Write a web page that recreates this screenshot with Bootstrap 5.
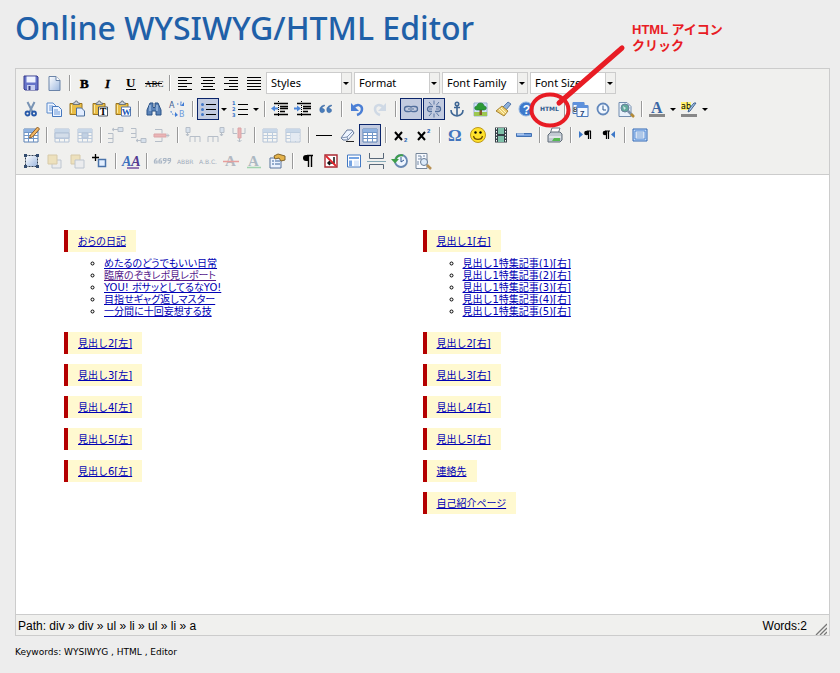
<!DOCTYPE html>
<html lang="ja">
<head>
<meta charset="utf-8">
<meta name="viewport" content="width=device-width, initial-scale=1">
<title>Online WYSIWYG/HTML Editor</title>
<link href="https://cdn.jsdelivr.net/npm/bootstrap@5.3.0/dist/css/bootstrap.min.css" rel="stylesheet">
<style>
body{background:#ededed;color:#000;font-family:"Liberation Sans","Noto Sans CJK JP",sans-serif}
.page{padding:8px 10px 8px 15px}
.site-title{font:500 32px/40px "Noto Sans","Open Sans",sans-serif;color:#1f60a8;margin:0 0 20px}
.editor{border:1px solid #ccc;background:#f0f0ee}
.tools{padding:3px 4px 2px;gap:4px;border-bottom:1px solid #ccc}
.tb{width:22px;height:22px;padding:0;margin-right:1px;border:1px solid transparent;border-radius:0;background:none;flex:none;line-height:0;color:#000}
.tb svg{width:20px;height:20px;display:block;overflow:visible}
.tb.on{border-color:#0a246a;background:#c2cbe0}
.tb:disabled{opacity:.4}
.tb.drop{width:8px}
.tb.drop svg{width:7px}
.rule{width:2px;height:16px;margin:0 3px;background:linear-gradient(90deg,#999 50%,#fff 50%);flex:none}
.pick{appearance:none;width:86px;height:22px;margin-right:2px;padding:0 12px 0 4px;border:1px solid #ccc;border-radius:0;color:#000;font:11px/18px "Noto Sans",sans-serif;
background:url("data:image/svg+xml,%3Csvg xmlns='http://www.w3.org/2000/svg' width='10' height='20'%3E%3Cpath d='M0 0h10v20H0z' fill='%23f0f0ee'/%3E%3Cpath d='M.5 0v20' stroke='%23ccc'/%3E%3Cpath d='M2 9h6l-3 3z'/%3E%3C/svg%3E") right center no-repeat #fff}
.canvas{background:#fff;min-height:439px;padding:55px 48px 20px;font:10px/12px "DejaVu Sans","Noto Sans CJK JP",sans-serif}
.canvas a{color:#0000b4}
.canvas a.seen{color:#551a8b}
.canvas .kana{font-feature-settings:"palt"}
.canvas h2{display:table;font:inherit;margin:0 0 10px;padding:6px 10px 4px;border-left:4px solid #b40000;background:#fff9d0}
.canvas .sub{list-style:circle;padding-left:40px;margin:-4px 0 14px}
.status{border-top:1px solid #ccc;font-size:12px;line-height:20px;padding:1px 2px 0;background:#f0f0ee;height:21px}
.grip{width:12px;height:12px;margin-left:8px}
.keywords{font:9px/12px "DejaVu Sans",sans-serif;margin:10px 0 0}
.mark-up{position:absolute;left:513px;top:-46px;width:112px;height:110px;pointer-events:none}
.callout{position:absolute;left:617px;top:-46px;color:#e81c24;font:bold 13px/16px "Liberation Sans","Noto Sans CJK JP",sans-serif}
.serif{font-family:"Liberation Serif",serif;font-weight:bold}
.tiny{font-family:"DejaVu Sans",sans-serif}
</style>
</head>
<body>
<svg width="0" height="0" class="position-absolute" aria-hidden="true">
<defs>
<linearGradient id="gb" x1="0" y1="0" x2="1" y2="1"><stop offset="0" stop-color="#fff"/><stop offset="1" stop-color="#9db8e0"/></linearGradient>
<symbol id="lines" viewBox="0 0 20 20"><path d="M3 4.500h14M3 7.500h9M3 10.500h14M3 13.500h9M3 16.500h14" stroke="#000"/></symbol>
<symbol id="clip" viewBox="0 0 20 20"><path d="M3 4.500h12v11H3z" fill="#e9bd45" stroke="#9a7420"/><path d="M4.500 6v8" stroke="#fbe9a0"/><path d="M6 5.500V4h1.500l1-2h1.500l1 2h1.500v1.500z" fill="#cdd3dc" stroke="#59636f" stroke-width=".8"/></symbol>
<symbol id="grid" viewBox="0 0 20 20"><path d="M3 4h14v13H3z" fill="#fff" stroke="#5c82b4"/><path d="M3 4h14v3H3z" fill="#8fb2e0"/><path d="M3 7.500h14M3 10.500h14M3 13.500h14M7.500 7v10M12.500 7v10" stroke="#7197c8"/></symbol>
<symbol id="down" viewBox="0 0 7 20"><path d="M0 9h6l-3 3z"/></symbol>
</defs>
</svg>
<main class="page">
<h1 class="site-title">Online WYSIWYG/HTML Editor</h1>
<div class="position-relative">
<section class="editor">
<div class="tools d-flex flex-column" role="toolbar" aria-label="Editor tools">
<div class="d-flex align-items-center">
<button class="tb" aria-label="Save"><svg><path d="M3 3h13l1 1v13H4l-1-1z" fill="#6674c9" stroke="#383d8d"/><path d="M5.500 3.500h9v6h-9z" fill="#eef3ff"/><path d="M6 12h8v5H6z" fill="#c6cef0"/><path d="M7.500 13h2v4h-2z" fill="#333c85"/></svg></button>
<button class="tb" aria-label="New document"><svg><path d="M5 3.500h7l4 4v10H5z" fill="url(#gb)" stroke="#6b84a8"/><path d="M12 3.500v4h4" fill="#fff" stroke="#6b84a8"/></svg></button>
<span class="rule"></span>
<button class="tb" aria-label="Bold"><svg><text x="5" y="15" class="serif" font-size="13" stroke="#000" stroke-width=".5">B</text></svg></button>
<button class="tb" aria-label="Italic"><svg><text x="7" y="15" class="serif" font-size="13" font-style="italic" stroke="#000" stroke-width=".3">I</text></svg></button>
<button class="tb" aria-label="Underline"><svg><text x="5" y="14" class="serif" font-size="13">U</text><path d="M5 16.500h10" stroke="#000"/></svg></button>
<button class="tb" aria-label="Strikethrough"><svg><text x="1" y="13.500" font-family="Liberation Serif" font-size="9">ABC</text><path d="M1 10.500h17" stroke="#000"/></svg></button>
<span class="rule"></span>
<button class="tb" aria-label="Align left"><svg><use href="#lines"/></svg></button>
<button class="tb" aria-label="Align center"><svg><path d="M3 4.500h14M5 7.500h10M3 10.500h14M5 13.500h10M3 16.500h14" stroke="#000"/></svg></button>
<button class="tb" aria-label="Align right"><svg><path d="M3 4.500h14M8 7.500h9M3 10.500h14M8 13.500h9M3 16.500h14" stroke="#000"/></svg></button>
<button class="tb" aria-label="Justify"><svg><path d="M3 4.500h14M3 7.500h14M3 10.500h14M3 13.500h14M3 16.500h14" stroke="#000"/></svg></button>
<select class="pick" aria-label="Styles"><option>Styles</option></select>
<select class="pick" aria-label="Format"><option>Format</option></select>
<select class="pick" aria-label="Font family"><option>Font Family</option></select>
<select class="pick" aria-label="Font size"><option>Font Size</option></select>
</div>
<div class="d-flex align-items-center">
<button class="tb" aria-label="Cut"><svg><path d="M6.500 3l5 10M13.500 3l-5 10" stroke="#7893b4" stroke-width="2"/><circle cx="6.500" cy="14.500" r="2" fill="none" stroke="#2759a9" stroke-width="1.800"/><circle cx="13" cy="14.500" r="2" fill="none" stroke="#2759a9" stroke-width="1.800"/></svg></button>
<button class="tb" aria-label="Copy"><svg><path d="M3 4h6l3 3v7H3z" fill="#eef5ff" stroke="#5b8acb"/><path d="M5 7h4M5 9h5M5 11h5" stroke="#6c99d8"/><path d="M8.500 7.500h6l3 3v7h-9z" fill="#eef5ff" stroke="#4577bd"/><path d="M10 11h4M10 13h6M10 15h6" stroke="#6c99d8"/></svg></button>
<button class="tb" aria-label="Paste"><svg><use href="#clip"/><path d="M9.500 9h5l3 3v5h-8z" fill="#e2edff" stroke="#4b6f9d"/></svg></button>
<button class="tb" aria-label="Paste as plain text"><svg><use href="#clip"/><path d="M8.500 8h9v9h-9z" fill="#fff" stroke="#4c5665"/><text x="9.800" y="16" class="serif" font-size="10">T</text></svg></button>
<button class="tb" aria-label="Paste from Word"><svg><use href="#clip"/><path d="M8.500 8h9v9h-9z" fill="#fff" stroke="#5879b0"/><text x="8.800" y="16" class="serif" font-size="9" fill="#1954b5">W</text></svg></button>
<span class="rule"></span>
<button class="tb" aria-label="Find"><svg><path d="M6 4h3v4l1 1 1-1V4h3l3 7v5h-5v-4H8v4H3v-5z" fill="#5b83b8" stroke="#2b5286"/><path d="M6 6v6M13 6v6" stroke="#bcd6f2"/></svg></button>
<button class="tb" aria-label="Find and replace"><svg><text x="2" y="9" class="tiny" font-size="8" fill="#3b5d91">A</text><text x="12" y="18" class="tiny" font-size="8" fill="#6d9bdd">B</text><path d="M10 5h7M14 2.500v6M4 12c0 3 2 4 6 4" stroke="#3f7bd5" stroke-dasharray="1.500" fill="none"/><path d="M14 7h3V3zM8 13l3 3-3 2z" fill="#3f7bd5"/></svg></button>
<span class="rule"></span>
<button class="tb on" aria-label="Bullet list" aria-pressed="true"><svg><path d="M8 5.500h10M8 10.500h10M8 15.500h10" stroke="#000"/><g fill="#4378c8"><circle cx="4.500" cy="5.500" r="1.500"/><circle cx="4.500" cy="10.500" r="1.500"/><circle cx="4.500" cy="15.500" r="1.500"/></g></svg></button><button class="tb drop" aria-label="Bullet style"><svg><use href="#down"/></svg></button>
<button class="tb" aria-label="Numbered list"><svg><path d="M8 5.500h10M8 10.500h10M8 15.500h10" stroke="#000"/><g class="tiny" font-size="5" font-weight="bold" fill="#346fc5"><text x="2" y="6">1</text><text x="2" y="12">2</text><text x="2" y="18">3</text></g></svg></button><button class="tb drop" aria-label="Number style"><svg><use href="#down"/></svg></button>
<span class="rule"></span>
<button class="tb" aria-label="Outdent"><svg><path d="M4 4.500h14M10 7.500h8M10 9.500h8M10 12.500h5M4 15.500h14" stroke="#000" stroke-width="1.400"/><path d="M8.500 2v16" stroke="#000" stroke-dasharray="1"/><path d="M1 9.500l4-3v2h3v2H5v2z" fill="#4c86d9"/></svg></button>
<button class="tb" aria-label="Indent"><svg><path d="M4 4.500h14M10 7.500h8M10 9.500h8M10 12.500h5M4 15.500h14" stroke="#000" stroke-width="1.400"/><path d="M8.500 2v16" stroke="#000" stroke-dasharray="1"/><path d="M8 9.500l-4-3v2H1v2h3v2z" fill="#4c86d9"/></svg></button>
<button class="tb" aria-label="Blockquote"><svg><path d="M8.500 6C4 7 3.500 9.500 4 12c.4 2.500 4.500 2 4.500-.5 0-1.500-1-2-2.500-2 0-1.500 1-2 2.500-2.500zM15.500 6C11 7 10.500 9.500 11 12c.4 2.500 4.500 2 4.500-.5 0-1.500-1-2-2.500-2 0-1.500 1-2 2.500-2.500z" fill="#497dbc" stroke="#315f99" stroke-width=".5"/></svg></button>
<span class="rule"></span>
<button class="tb" aria-label="Undo"><svg><path d="M6 9c4-5 9-3 9 1 0 3-2 5-5 6" fill="none" stroke="#4b7fd5" stroke-width="2.500"/><path d="M4 4v8h8z" fill="#4b7fd5"/></svg></button>
<button class="tb" aria-label="Redo" disabled><svg><path d="M14 9c-4-5-9-3-9 1 0 3 2 5 5 6" fill="none" stroke="#9eb7d8" stroke-width="2.500"/><path d="M16 4v8H8z" fill="#9eb7d8"/></svg></button>
<span class="rule"></span>
<button class="tb on" aria-label="Insert link" aria-pressed="true"><svg fill="none" stroke="#516e9c" stroke-width="1.300"><rect x="3.500" y="7.500" width="7" height="5" rx="2.500"/><rect x="9.500" y="7.500" width="7" height="5" rx="2.500"/><path d="M7 10h6" stroke="#fff" stroke-width="2.500"/><path d="M7 10h6"/></svg></button>
<button class="tb on" aria-label="Remove link" aria-pressed="true"><svg fill="none" stroke="#516e9c" stroke-width="1.300"><path d="M9 7.500H6a2.500 2.500 0 0 0 0 5h2M11 12.500h3a2.500 2.500 0 0 0 0-5h-2"/><path d="M5 10h3M12 10h3M10 1.500v4M10 14.500v4M5 3l2.500 3M15 3l-2.500 3M5 17l2.500-3M15 17l-2.500-3" stroke-width=".9"/></svg></button>
<button class="tb" aria-label="Anchor"><svg fill="none" stroke="#3e6694" stroke-width="1.600"><circle cx="10" cy="5" r="1.700"/><path d="M10 7v9M7 8.500h6M4 11c0 4 3 5.500 6 6 3-.5 6-2 6-6"/></svg></button>
<button class="tb" aria-label="Insert image"><svg><path d="M4 4h13v13H4z" fill="#cfe3fb" stroke="#9bb1d0"/><path d="M4 13h13v4H4z" fill="#9cc751"/><path d="M9.500 10h2.500v6H9.500z" fill="#87552b"/><path d="M7 11c-3 0-3-4 0-4 0-4 7-4 7 0 3 0 3 4 0 4z" fill="#2c9a35" stroke="#17702b" stroke-width=".6"/></svg></button>
<button class="tb" aria-label="Clean up"><svg><path d="M15 3l3 2-5 6-3-3z" fill="#8fb1d9" stroke="#3b629d" stroke-width=".8"/><path d="M9 7l6 5-4 5-8-5z" fill="#edcf73" stroke="#a88431"/><path d="M6 10l5 5M8 9l5 5" stroke="#fff6bf"/></svg></button>
<button class="tb" aria-label="Help"><svg><circle cx="10" cy="10" r="7" fill="#3d79cc" stroke="#8fb2e0"/><text x="6.800" y="14.500" font-size="12" font-weight="bold" fill="#fff">?</text></svg></button>
<button class="tb" aria-label="Edit HTML source"><svg><text x="1" y="12" class="tiny" font-size="6" font-weight="bold" fill="#315c8f">HTML</text></svg></button>
<span class="rule"></span>
<button class="tb" aria-label="Insert date"><svg><path d="M3 3.500h11v11H3z" fill="#f4f9ff" stroke="#4776bb"/><path d="M3 3h11v3H3z" fill="#5e91dc"/><text x="3" y="13" font-size="7" class="tiny">8</text><path d="M7 6.500h11v11H7z" fill="#f4f9ff" stroke="#4776bb"/><path d="M7 6h11v3H7z" fill="#5e91dc"/><text x="10" y="16.500" font-size="8" font-weight="bold" fill="#223f71">7</text></svg></button>
<button class="tb" aria-label="Insert time"><svg><circle cx="10" cy="10" r="5.500" fill="#f2f8ff" stroke="#6388bb" stroke-width="1.800"/><path d="M10 6.500V11h3" stroke="#31588d" fill="none"/></svg></button>
<button class="tb" aria-label="Preview"><svg><path d="M3 3.500h8l4 4v10H3z" fill="#e8f1fb" stroke="#738daf"/><circle cx="9" cy="9" r="4" fill="#62a99a" stroke="#68819d"/><path d="M7 7l3 2-2 2" fill="#cfe6e9"/><path d="M12 12l5 5" stroke="#7d91aa" stroke-width="2.500"/><path d="M15 15l3 3" stroke="#b58b36" stroke-width="2.500"/></svg></button>
<span class="rule"></span>
<button class="tb" aria-label="Text colour"><svg><text x="4" y="14" class="serif" font-size="16" fill="#3a67a5">A</text><path d="M2 15h16v3H2z" fill="#888"/></svg></button><button class="tb drop" aria-label="Choose text colour"><svg><use href="#down"/></svg></button>
<button class="tb" aria-label="Background colour"><svg><path d="M2 3h10v8H2z" fill="#fff36e"/><text x="2" y="10" class="tiny" font-size="8">ab</text><path d="M17 4l-6 8-2 1 1-3 5-6z" fill="#abc8ee" stroke="#3e638f"/><path d="M2 15h16v3H2z" fill="#888"/></svg></button><button class="tb drop" aria-label="Choose background colour"><svg><use href="#down"/></svg></button>
</div>
<div class="d-flex align-items-center">
<button class="tb" aria-label="Insert table"><svg><use href="#grid"/><path d="M16.500 2l2 2-7 8-3 1 1-3z" fill="#f2b763" stroke="#8c5d29"/></svg></button>
<span class="rule"></span>
<button class="tb" aria-label="Row properties" disabled><svg><use href="#grid"/><path d="M3 8h14v5H3z" fill="#a8c1e4" stroke="#587fb5"/></svg></button>
<button class="tb" aria-label="Cell properties" disabled><svg><use href="#grid"/><path d="M7 8h6v5H7z" fill="#7da3d5" stroke="#587fb5"/></svg></button>
<span class="rule"></span>
<button class="tb" aria-label="Insert row before" disabled><svg fill="none" stroke="#607590"><path d="M2 8.500h5v9H2M2 13.500h5M7 4.500h5M8 3L6 4.500 8 6"/><path d="M12 2.500h5v4h-5z" fill="#b4cceb"/></svg></button>
<button class="tb" aria-label="Insert row after" disabled><svg fill="none" stroke="#607590"><path d="M2 3.500h5v9H2M2 8.500h5M7 15.500h5M9 14l-2 1.500L9 17"/><path d="M12 13.500h5v4h-5z" fill="#b4cceb"/></svg></button>
<button class="tb" aria-label="Delete row" disabled><svg fill="none" stroke="#607590"><path d="M3 4.500h7v4M3 16.500h7v-4"/><path d="M2 9h12v3H2z" fill="#e45b61" stroke="#be3940"/><path d="M14 10.500h3M15 8.500l2 2-2 2"/></svg></button>
<span class="rule"></span>
<button class="tb" aria-label="Insert column before" disabled><svg fill="none" stroke="#607590"><path d="M7 17v-5.500h10V17M12 11v6M4.500 7v4M3 9l1.500 2L6 9"/><path d="M3 2.500h4v5H3z" fill="#b4cceb"/></svg></button>
<button class="tb" aria-label="Insert column after" disabled><svg fill="none" stroke="#607590"><path d="M2 17v-5.500h10V17M7 11v6M15.500 7v4M14 9l1.500 2L17 9"/><path d="M14 2.500h4v5h-4z" fill="#b4cceb"/></svg></button>
<button class="tb" aria-label="Delete column" disabled><svg fill="none" stroke="#607590"><path d="M4 3v5.500h4M16 3v5.500h-4"/><path d="M9 3h3v10H9z" fill="#e45b61" stroke="#be3940"/><path d="M10.500 13v4M8.500 15l2 2 2-2"/></svg></button>
<span class="rule"></span>
<button class="tb" aria-label="Split cells" disabled><svg><use href="#grid"/></svg></button>
<button class="tb" aria-label="Merge cells" disabled><svg><use href="#grid"/><path d="M7.500 8h9v8h-9z" fill="#d4e3f8"/></svg></button>
<span class="rule"></span>
<button class="tb" aria-label="Horizontal rule"><svg><path d="M2 10.500h16" stroke="#000"/></svg></button>
<button class="tb" aria-label="Remove formatting"><svg><path d="M4 13l6-8h5l2 3-6 7H6z" fill="#edf4ff" stroke="#66799a"/><path d="M4 13l6-1 1 3M10 12l6-6" stroke="#8295b3" fill="none"/><path d="M9 16.500h8" stroke="#222"/></svg></button>
<button class="tb on" aria-label="Toggle guidelines" aria-pressed="true"><svg><use href="#grid"/></svg></button>
<span class="rule"></span>
<button class="tb" aria-label="Subscript"><svg><path d="M4 7l7 8M11 7l-7 8" stroke="#000" stroke-width="2"/><text x="13" y="17" font-size="6" font-weight="bold" fill="#245eb0">2</text></svg></button>
<button class="tb" aria-label="Superscript"><svg><path d="M4 7l7 8M11 7l-7 8" stroke="#000" stroke-width="2"/><text x="13" y="8" font-size="6" font-weight="bold" fill="#245eb0">2</text></svg></button>
<span class="rule"></span>
<button class="tb" aria-label="Special character"><svg><text x="3" y="16" class="serif" font-size="17" fill="#4275bd">Ω</text></svg></button>
<button class="tb" aria-label="Emoticon"><svg><circle cx="10" cy="10" r="7.500" fill="#ffe12b" stroke="#bd981c"/><circle cx="7.500" cy="7.500" r="1.200"/><circle cx="12.500" cy="7.500" r="1.200"/><path d="M5.500 11c1 4.500 8 4.500 9 0" fill="none" stroke="#6b4b00" stroke-width="1.200"/></svg></button>
<button class="tb" aria-label="Insert media"><svg><path d="M4 2.500h12v15H4z" fill="#354047"/><path d="M7 3h6v6H7zM7 11h6v6H7z" fill="#7fc1a9"/><path d="M5.500 3v15M14.500 3v15" stroke="#fff" stroke-dasharray="1.500" stroke-width="1"/></svg></button>
<button class="tb" aria-label="Advanced rule"><svg><path d="M2.500 8.500h15v3h-15z" fill="#78a3df" stroke="#4070b2"/><path d="M3 9h7" stroke="#dbeaff"/></svg></button>
<span class="rule"></span>
<button class="tb" aria-label="Print"><svg><path d="M7 3h8l-2 6H5z" fill="#fff" stroke="#6e7b88"/><path d="M3 10l3-3h9l2 2v6l-2 2H3z" fill="#c2cad3" stroke="#606c78"/><path d="M4 12h12" stroke="#fff"/><path d="M9 13h6v3H7z" fill="#55b951"/></svg></button>
<span class="rule"></span>
<button class="tb" aria-label="Left to right"><svg><path d="M3 6l4 3.500L3 13z" fill="#3d78c8"/><path d="M11 6H15M12.500 6v8M14.500 6v8" stroke="#000" stroke-width="1.200"/><circle cx="10.500" cy="8" r="2.300"/></svg></button>
<button class="tb" aria-label="Right to left"><svg><path d="M16 6l-4 3.500 4 3.500z" fill="#3d78c8"/><path d="M6 6h5M7.500 6v8M9.500 6v8" stroke="#000" stroke-width="1.200"/><circle cx="6" cy="8" r="2.300"/></svg></button>
<span class="rule"></span>
<button class="tb" aria-label="Full screen"><svg><path d="M3 4h14v12H3z" fill="#c1dbfb" stroke="#3269b4"/><path d="M5 6h10v8H5z" fill="#fff" stroke="#4b83d0"/><path d="M6.500 8h7M6.500 10h7M6.500 12h7" stroke="#5f91d2"/></svg></button>
</div>
<div class="d-flex align-items-center">
<button class="tb" aria-label="Insert layer"><svg><path d="M4.500 4.500h12v11h-12z" fill="url(#gb)" stroke="#334255" stroke-dasharray="2 1"/><path d="M3 3h3v3H3zM15 3h3v3h-3zM3 14h3v3H3zM15 14h3v3h-3z" fill="#334c6f"/></svg></button>
<button class="tb" aria-label="Move forward" disabled><svg><path d="M8 9h9v8H8z" fill="#e4e7ee" stroke="#7488a5"/><path d="M4 4h9v9H4z" fill="#ebcb75" stroke="#b39345"/></svg></button>
<button class="tb" aria-label="Move backward" disabled><svg><path d="M4 4h9v9H4z" fill="#ebcb75" stroke="#b39345"/><path d="M8 9h9v8H8z" fill="#e4e7ee" stroke="#7488a5"/></svg></button>
<button class="tb" aria-label="Absolute position"><svg><path d="M8.500 8.500h7v7h-7z" fill="#e3efff" stroke="#4a73aa" stroke-width="1.500"/><path d="M2 6.500h7M5.500 3v7" stroke="#000" stroke-width="1.300"/></svg></button>
<span class="rule"></span>
<button class="tb" aria-label="Edit style"><svg><text x="1" y="15" class="serif" font-size="14" font-style="italic"><tspan fill="#3c70bd">A</tspan><tspan fill="#533b91">A</tspan></text><path d="M6 17h12" stroke="#7550a0" stroke-width="1.500"/></svg></button>
<span class="rule"></span>
<button class="tb" aria-label="Citation" disabled><svg fill="none" stroke="#45648c" stroke-width="1.200"><path d="M5 7.500C2.500 8 2 10 2.600 12H5v-2H3M9.500 7.500C7 8 6.500 10 7.100 12h2.400v-2h-2M11.500 7.500h2.400c.5 2 0 4-2.400 5M13.500 9.500h-2v-2M16 7.500h2.400c.5 2 0 4-2.400 5M18 9.500h-2v-2"/></svg></button>
<button class="tb" aria-label="Abbreviation" disabled><svg><text x="2" y="13" class="tiny" font-size="6" fill="#1f426e">ABBR</text></svg></button>
<button class="tb" aria-label="Acronym" disabled><svg><text x="1" y="13" class="tiny" font-size="6" fill="#1f426e">A.B.C.</text></svg></button>
<button class="tb" aria-label="Deletion" disabled><svg><text x="4" y="15" class="serif" font-size="15" fill="#5a6981">A</text><path d="M2 10.500h16" stroke="#db2525" stroke-width="1.500"/></svg></button>
<button class="tb" aria-label="Insertion" disabled><svg><text x="4" y="15" class="serif" font-size="15" fill="#466782">A</text><path d="M3 16.500h14" stroke="#2ba850" stroke-width="1.500"/></svg></button>
<button class="tb" aria-label="Attributes"><svg><path d="M3 7h11v10H3z" fill="#eaf2ff" stroke="#58759d"/><path d="M5 10h2M5 13h2M8 10h5M8 13h5" stroke="#3b659b"/><path d="M7 5l4-2 7 2v4l-4 1-2-3-4 1z" fill="#e5b34a" stroke="#82652e"/></svg></button>
<span class="rule"></span>
<button class="tb" aria-label="Visual characters"><svg><path d="M9 4.500h6M10.500 4v12M13.500 4v12" stroke="#000" stroke-width="1.400"/><path d="M10 4H8a3 3 0 0 0 0 6h2z"/></svg></button>
<button class="tb" aria-label="Non-breaking space"><svg><path d="M4 4h12v12H4z" fill="#fff" stroke="#aa2932" stroke-width="1.400"/><path d="M13 6v6H7M9 10l-2 2 2 2" stroke="#111" fill="none" stroke-width="1.500"/><path d="M5 5l10 10" stroke="#e1262c" stroke-width="1.800"/></svg></button>
<button class="tb" aria-label="Template"><svg><path d="M3.500 4h13v12h-13z" fill="#fff" stroke="#4379c2"/><path d="M5 6h10v2H5zM5 9.500h3V15H5z" fill="#75a4e3"/><path d="M10 9.500h5V15h-5z" fill="#dbe8fa"/></svg></button>
<button class="tb" aria-label="Page break"><svg fill="none" stroke="#586879"><path d="M2.500 2v5.500h14V2M2.500 18v-4.500h14V18"/><path d="M0 10.500h19" stroke="#86aab7"/></svg></button>
<button class="tb" aria-label="Restore draft"><svg><circle cx="11" cy="10" r="6" fill="#eef5ff" stroke="#6888b2" stroke-width="1.800"/><path d="M11 6v5l3-2" fill="none" stroke="#355a91"/><path d="M6 8c1-3 4-4.500 7-3.500" fill="none" stroke="#3f9f49" stroke-width="2"/><path d="M1 8h8l-4 4.500z" fill="#3f9f49"/></svg></button>
<button class="tb" aria-label="Page preview"><svg><path d="M3 2.500h11v15H3z" fill="#f7faff" stroke="#76869a"/><path d="M5 5h3v3H5M10 5h2M5 10v4" stroke="#758aa6" fill="none"/><circle cx="11" cy="11" r="3.500" fill="#dceaf9" stroke="#657a94"/><path d="M14 14l4 4" stroke="#b89155" stroke-width="2.500"/></svg></button>
</div>
</div>
<div class="canvas">
<div class="row g-0">
<div class="col-6">
<h2 class="kana"><a href="#">おらの日記</a></h2>
<ul class="sub kana"><li><a href="#">めたるのどうでもいい日常</a></li><li><a href="#" class="seen">臨席のぞきレポ見レポート</a></li><li><a href="#">YOU! ボサッとしてるなYO!</a></li><li><a href="#">目指せギャグ返しマスター</a></li><li><a href="#">一分間に十回妄想する技</a></li></ul>
<h2><a href="#">見出し2[左]</a></h2>
<h2><a href="#">見出し3[左]</a></h2>
<h2><a href="#">見出し4[左]</a></h2>
<h2><a href="#">見出し5[左]</a></h2>
<h2><a href="#">見出し6[左]</a></h2>
</div>
<div class="col-6">
<h2><a href="#">見出し1[右]</a></h2>
<ul class="sub"><li><a href="#">見出し1特集記事(1)[右]</a></li><li><a href="#">見出し1特集記事(2)[右]</a></li><li><a href="#">見出し1特集記事(3)[右]</a></li><li><a href="#">見出し1特集記事(4)[右]</a></li><li><a href="#">見出し1特集記事(5)[右]</a></li></ul>
<h2><a href="#">見出し2[右]</a></h2>
<h2><a href="#">見出し3[右]</a></h2>
<h2><a href="#">見出し4[右]</a></h2>
<h2><a href="#">見出し5[右]</a></h2>
<h2><a href="#">連絡先</a></h2>
<h2 class="kana"><a href="#">自己紹介ページ</a></h2>
</div>
</div>
</div>
<div class="status d-flex">
<span class="me-auto">Path: div » div » ul » li » ul » li » a</span><span>Words:2</span>
<svg class="grip align-self-end" viewBox="0 0 12 12" aria-hidden="true"><path d="M1 12L12 1M5 12l7-7M9 12l3-3" stroke="#777" stroke-width="1.300"/></svg>
</div>
</section>
<div class="callout">HTML アイコン<br>クリック</div>
<svg class="mark-up" viewBox="0 0 112 110" fill="none" stroke="#e81c24" aria-hidden="true"><ellipse cx="22" cy="88" rx="18.500" ry="15.500" stroke-width="4"/><path d="M31 81L94 26" stroke-width="5" stroke-linecap="round"/></svg>
</div>
<p class="keywords">Keywords: WYSIWYG , HTML , Editor</p>
</main>
<script src="https://cdn.jsdelivr.net/npm/bootstrap@5.3.0/dist/js/bootstrap.bundle.min.js"></script>
</body>
</html>
